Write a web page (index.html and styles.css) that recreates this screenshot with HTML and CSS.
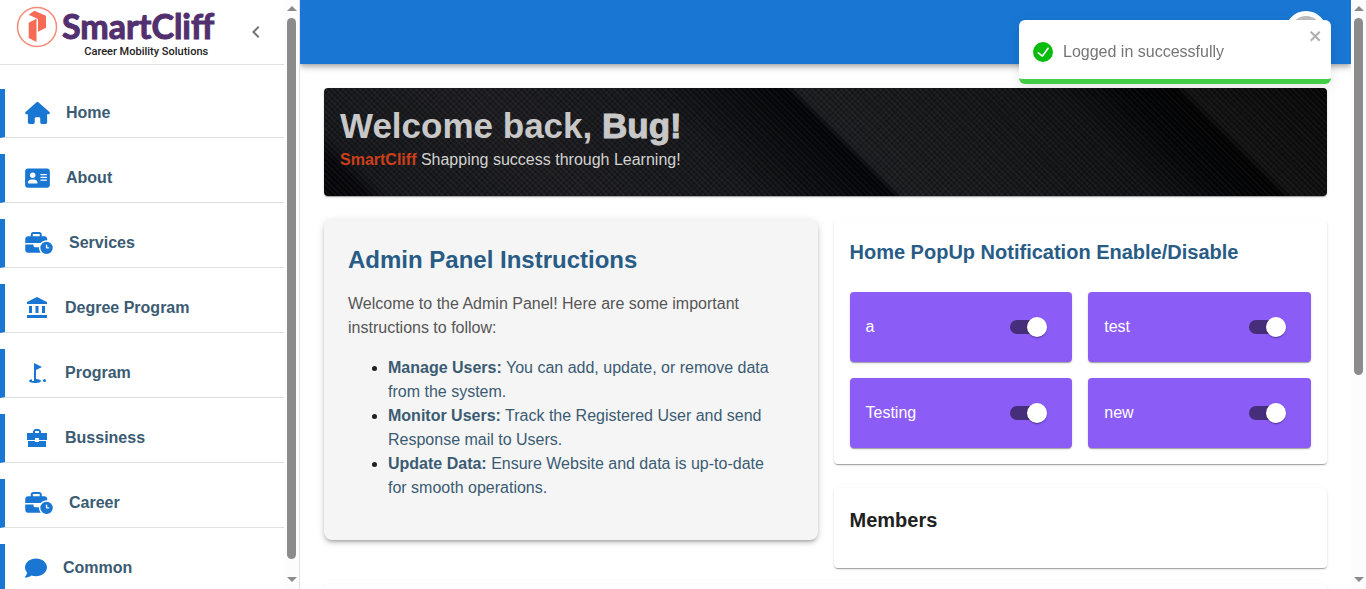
FILE: index.html
```html
<!DOCTYPE html>
<html lang="en">
<head>
<meta charset="utf-8">
<title>SmartCliff Admin</title>
<link rel="stylesheet" href="styles.css">
</head>
<body>
<svg class="symbols" aria-hidden="true">
  <symbol id="business-time" viewBox="0 0 640 512"><path d="M184 48h144c4.400 0 8 3.600 8 8v40H176V56c0-4.400 3.600-8 8-8zm-56 8v40H64C28.700 96 0 124.700 0 160v96h360.200c32.300-39.100 81.100-64 135.800-64 5.400 0 10.700.2 16 .7V160c0-35.300-28.700-64-64-64h-64V56c0-30.900-25.100-56-56-56H184c-30.900 0-56 25.100-56 56zM320 352h-96c-17.700 0-32-14.300-32-32v-32H0v128c0 35.300 28.700 64 64 64h296.200C335.100 449.600 320 410.500 320 368c0-5.400.2-10.700.7-16zM496 512a144 144 0 1 0 0-288 144 144 0 1 0 0 288zm16-208v48h32c8.800 0 16 7.200 16 16s-7.200 16-16 16h-48c-8.800 0-16-7.200-16-16v-64c0-8.800 7.200-16 16-16s16 7.200 16 16z"/></symbol>
</svg>
<div class="app">
  <aside class="sidebar">
    <div class="sidebar-content">
      <div class="brand-bar">
        <div class="brand">
          <svg class="brand-mark" viewBox="0 0 42 42" aria-hidden="true">
            <circle cx="21" cy="21" r="19.500" fill="#fff" stroke="#f58a76" stroke-width="1.500"/>
            <path d="M12.700 8.700 18.300 4.700 30 9.700V21.700L22 25.700V13z" fill="#f56b55"/>
            <path d="M12.700 16.800 20.500 12.700V36L12.700 32z" fill="#f56b55"/>
          </svg>
          <div class="brand-words">
            <span class="brand-name">SmartCliff</span>
            <span class="brand-tagline">Career Mobility Solutions</span>
          </div>
        </div>
        <button class="collapse" type="button" aria-label="Collapse menu">
          <svg viewBox="0 0 24 24" width="24" height="24"><path d="M15.410 7.410 14 6l-6 6 6 6 1.410-1.410L10.830 12z" fill="#757575"/></svg>
        </button>
      </div>
      <nav class="menu">
        <a class="menu-item" href="#"><svg class="icon-wide" viewBox="0 0 576 512"><path d="M575.8 255.500c0 18-15 32.100-32 32.100h-32l.7 160.200c0 2.700-.2 5.400-.5 8.100v16.200c0 22.100-17.900 40-40 40h-80c-22.100 0-40-17.900-40-40v-88c0-17.700-14.300-32-32-32h-64c-17.700 0-32 14.300-32 32v88c0 22.100-17.900 40-40 40h-80c-22.100 0-40-17.900-40-40V287.600H32c-18 0-32-14-32-32.100 0-9 3-17 10-24L266.400 8c7-7 15-8 22-8s15 2 21 7l255.400 224.500c8 7 12 15 11 24z"/></svg>Home</a>
        <a class="menu-item" href="#"><svg class="icon-wide" viewBox="0 0 576 512"><path d="M64 32C28.700 32 0 60.700 0 96v320c0 35.300 28.700 64 64 64h448c35.300 0 64-28.700 64-64V96c0-35.300-28.700-64-64-64H64zm80 256h64c44.200 0 80 35.800 80 80 0 8.800-7.200 16-16 16H80c-8.800 0-16-7.200-16-16 0-44.200 35.800-80 80-80zm-32-96a64 64 0 1 1 128 0 64 64 0 1 1-128 0zm256-32h128c8.800 0 16 7.200 16 16s-7.200 16-16 16H368c-8.800 0-16-7.200-16-16s7.200-16 16-16zm0 64h128c8.800 0 16 7.200 16 16s-7.200 16-16 16H368c-8.800 0-16-7.200-16-16s7.200-16 16-16zm0 64h128c8.800 0 16 7.200 16 16s-7.200 16-16 16H368c-8.800 0-16-7.200-16-16s7.200-16 16-16z"/></svg>About</a>
        <a class="menu-item" href="#"><svg class="icon-wider"><use href="#business-time"/></svg>Services</a>
        <a class="menu-item" href="#"><svg class="icon" viewBox="0 0 24 24"><path d="M12 1 2 6v2h20V6zM4 10h3v7H4zm6.500 0h3v7h-3zm6.500 0h3v7h-3zM2 19h20v3H2z"/></svg>Degree Program</a>
        <a class="menu-item" href="#"><svg class="icon" viewBox="0 0 24 24"><circle cx="19.500" cy="19.500" r="1.500"/><path d="M17 5.920 9 2v18H7v-1.730c-1.790.350-3 .990-3 1.730 0 1.100 2.690 2 6 2s6-.9 6-2c0-.990-2.160-1.810-5-1.970V8.980l6-3.060z"/></svg>Program</a>
        <a class="menu-item" href="#"><svg class="icon" viewBox="0 0 24 24"><path d="M22 7h-6V5l-2-2h-4L8 5v2H2v7h8v-2h4v2h8V7zm-8 0h-4V5h4v2zm0 9h-4v-1H3v6h18v-6h-7z"/></svg>Bussiness</a>
        <a class="menu-item" href="#"><svg class="icon-wider"><use href="#business-time"/></svg>Career</a>
        <a class="menu-item" href="#"><svg class="icon-square" viewBox="0 0 512 512"><path d="M512 240c0 114.900-114.600 208-256 208-37.100 0-72.300-6.400-104.100-17.900-11.900 8.700-31.300 20.600-54.300 30.600C73.600 471.100 44.700 480 16 480c-6.500 0-12.300-3.900-14.800-9.900s-1.100-12.800 3.400-17.400c0 0 3-3 6.500-7.400 4.100-5 9.600-12.400 15.200-21.600 10-16.600 19.500-38.400 21.400-62.900C17.700 326.800 0 285.100 0 240 0 125.100 114.600 32 256 32s256 93.100 256 208z"/></svg>Common</a>
      </nav>
    </div>
    <div class="scrollbar" aria-hidden="true"><i class="arrow-up"></i><i class="thumb thumb-menu"></i><i class="arrow-down"></i></div>
  </aside>

  <div class="page">
    <header class="topbar">
      <button class="avatar" type="button" aria-label="Account"></button>
    </header>
    <main class="content">
      <section class="banner">
        <h1 class="banner-title">Welcome back, <span class="banner-name">Bug!</span></h1>
        <p class="banner-text"><span class="banner-brand">SmartCliff</span> Shapping success through Learning!</p>
      </section>
      <div class="columns">
        <section class="instructions">
          <h2 class="instructions-title">Admin Panel Instructions</h2>
          <p class="instructions-intro">Welcome to the Admin Panel! Here are some important instructions to follow:</p>
          <ul class="instructions-list">
            <li><b>Manage Users:</b> You can add, update, or remove data from the system.</li>
            <li><b>Monitor Users:</b> Track the Registered User and send Response mail to Users.</li>
            <li><b>Update Data:</b> Ensure Website and data is up-to-date for smooth operations.</li>
          </ul>
        </section>
        <div class="side">
          <section class="card">
            <h2 class="card-title card-title-accent">Home PopUp Notification Enable/Disable</h2>
            <div class="tiles">
              <label class="tile">a<input class="switch" type="checkbox" role="switch" checked></label>
              <label class="tile">test<input class="switch" type="checkbox" role="switch" checked></label>
              <label class="tile">Testing<input class="switch" type="checkbox" role="switch" checked></label>
              <label class="tile">new<input class="switch" type="checkbox" role="switch" checked></label>
            </div>
          </section>
          <section class="card card-members">
            <h2 class="card-title">Members</h2>
          </section>
        </div>
      </div>
      <section class="card card-next"></section>
    </main>
  </div>
  <div class="scrollbar" aria-hidden="true"><i class="arrow-up"></i><i class="thumb thumb-page"></i><i class="arrow-down"></i></div>
</div>

<div class="toast" role="alert">
  <svg class="toast-icon" viewBox="0 0 24 24"><path d="M12 0a12 12 0 1 0 12 12A12.014 12.014 0 0 0 12 0zm6.927 8.200-6.845 9.289a1.011 1.011 0 0 1-1.430.188l-4.888-3.908a1 1 0 1 1 1.250-1.562l4.076 3.261 6.227-8.451a1 1 0 1 1 1.610 1.183z" fill="#07bc0c"/></svg>
  <span class="toast-text">Logged in successfully</span>
  <button class="toast-close" type="button" aria-label="Close"><svg viewBox="0 0 14 16" width="14" height="16"><path fill="#b0b0b0" fill-rule="evenodd" d="M7.710 8.230l3.750 3.750-1.480 1.480-3.750-3.750-3.750 3.750L1 11.980l3.750-3.750L1 4.480 2.480 3l3.750 3.750L9.980 3l1.480 1.480-3.750 3.750z"/></svg></button>
</div>
</body>
</html>
```
FILE: styles.css
```css
* { box-sizing: border-box; }

body {
  margin: 0;
  font: 16px/24px "Liberation Sans", Arial, sans-serif;
  color: #212121;
  background: #fff;
}

h1, h2, p, ul { margin: 0; }
button { border: 0; padding: 0; background: none; cursor: pointer; }

.symbols { display: none; }

.app { display: flex; height: 100vh; overflow: hidden; }

/* Sidebar */
.sidebar {
  flex: 0 0 300px;
  display: flex;
  border-right: 1px solid #e0e0e0;
}
.sidebar-content { flex: 1; overflow: hidden; }
.brand-bar {
  display: flex;
  align-items: center;
  justify-content: space-between;
  height: 65px;
  padding: 0 16px;
  border-bottom: 1px solid #e0e0e0;
}
.brand { display: flex; align-items: flex-start; gap: 4px; }
.brand-mark { width: 42px; height: 42px; }
.brand-words { display: flex; flex-direction: column; align-items: flex-end; }
.brand-name {
  font: 700 34px/40px Lato, sans-serif;
  color: #522f6e;
  -webkit-text-stroke: 1px #522f6e;
}
.brand-tagline {
  padding-right: 6px;
  font: 500 11px/12px Roboto, sans-serif;
  color: #222;
}
.collapse { display: flex; }

.menu {
  display: flex;
  flex-direction: column;
  gap: 16px;
  padding-top: 24px;
}
.menu-item {
  display: flex;
  align-items: center;
  gap: 16px;
  height: 49px;
  flex: none;
  padding-left: 20px;
  border-left: 5px solid #1976d2;
  border-bottom: 1px solid #e0e0e0;
  font-weight: 700;
  color: #3b5b73;
  text-decoration: none;
}
.menu-item svg { flex: none; fill: #1976d2; }
.icon { width: 24px; height: 24px; }
.icon-wide { width: 25px; height: 22px; }
.icon-wider { width: 28px; height: 22px; }
.icon-square { width: 22px; height: 22px; }

/* Scrollbars */
.scrollbar {
  flex: 0 0 15px;
  display: flex;
  flex-direction: column;
  align-items: center;
  padding: 6px 0 7px;
  background: #fcfcfc;
}
.arrow-up, .arrow-down {
  border: solid transparent;
  border-width: 0 5px;
}
.arrow-up { border-bottom: 5px solid #8b8b8b; }
.arrow-down { margin-top: auto; border-top: 5px solid #8b8b8b; }
.thumb {
  width: 9px;
  margin-top: 7px;
  border-radius: 5px;
  background: #8b8b8b;
}
.thumb-menu { height: 94%; }
.thumb-page { height: 62%; }

/* Page */
.page { flex: 1; min-width: 0; overflow: hidden; }
.topbar {
  display: flex;
  align-items: center;
  justify-content: flex-end;
  height: 64px;
  padding: 0 24px;
  background: #1976d2;
  box-shadow: 0 2px 4px -1px rgba(0,0,0,.2), 0 4px 5px rgba(0,0,0,.14), 0 1px 10px rgba(0,0,0,.12);
}
.avatar {
  width: 42px;
  height: 42px;
  border: 5px solid #fff;
  border-radius: 50%;
  background: #bdbdbd;
}
.content {
  display: flex;
  flex-direction: column;
  padding: 24px;
}

.banner {
  height: 108px;
  padding: 16px;
  border-radius: 4px;
  color: #c8c8c8;
  background:
    repeating-linear-gradient(45deg, rgba(255,255,255,.04) 0 1px, transparent 2px 4px),
    repeating-linear-gradient(-45deg, rgba(0,0,0,.25) 0 1px, transparent 2px 4px),
    linear-gradient(45deg, #07070b 30px, #17181b 46px, #1d1d21 180px, #17181b 300px, #08090c 375px, #030408 402px, #1c1d20 410px, #17181a 500px, #101214 590px, #040506 640px, #020203 677px, #121212 685px, #080808 785px);
  box-shadow: 0 2px 1px -1px rgba(0,0,0,.2), 0 1px 1px rgba(0,0,0,.14), 0 1px 3px rgba(0,0,0,.12);
}
.banner-title { font-size: 35px; line-height: 44px; }
.banner-name { font-weight: 900; -webkit-text-stroke: 1px #c8c8c8; }
.banner-text { color: #d2d2d2; }
.banner-brand { font-weight: 700; color: #cb3f19; }

.columns {
  display: grid;
  grid-template-columns: 1fr 1fr;
  align-items: start;
  gap: 16px;
  margin-top: 24px;
}

.instructions {
  padding: 24px;
  border-radius: 8px;
  background: #f5f5f5;
  box-shadow: 0 3px 3px -2px rgba(0,0,0,.2), 0 3px 4px rgba(0,0,0,.14), 0 1px 8px rgba(0,0,0,.12);
}
.instructions-title {
  margin-bottom: 16px;
  font-size: 24px;
  line-height: 32px;
  color: #285c86;
}
.instructions-intro { color: #555; }
.instructions-list { margin: 16px 0; padding: 0 16px 0 40px; color: #3b5b73; }
.instructions-list li::marker { color: #212121; }

.side { display: flex; flex-direction: column; gap: 24px; }
.card {
  padding: 16px;
  border-radius: 4px;
  background: #fff;
  box-shadow: 0 2px 1px -1px rgba(0,0,0,.2), 0 1px 1px rgba(0,0,0,.14), 0 1px 3px rgba(0,0,0,.12);
}
.card-title { font-size: 20px; line-height: 32px; }
.card-title-accent { color: #285c86; }
.card-members { padding-bottom: 32px; }
.card-next { margin-top: 16px; height: 200px; }

.tiles {
  display: grid;
  grid-template-columns: 1fr 1fr;
  gap: 16px;
  margin-top: 24px;
}
.tile {
  display: flex;
  align-items: center;
  justify-content: space-between;
  padding: 16px;
  border-radius: 4px;
  color: #fff;
  background: #8b5cf6;
  box-shadow: 0 2px 1px -1px rgba(0,0,0,.2), 0 1px 1px rgba(0,0,0,.14), 0 1px 3px rgba(0,0,0,.12);
}
.switch {
  appearance: none;
  position: relative;
  width: 58px;
  height: 38px;
  margin: 0;
  padding: 12px;
  cursor: pointer;
}
.switch::before {
  content: "";
  display: block;
  width: 34px;
  height: 14px;
  border-radius: 7px;
  background: #462e7b;
}
.switch::after {
  content: "";
  position: absolute;
  top: 9px;
  left: 9px;
  width: 20px;
  height: 20px;
  border-radius: 50%;
  background: #fff;
  box-shadow: 0 2px 1px -1px rgba(0,0,0,.2), 0 1px 1px rgba(0,0,0,.14), 0 1px 3px rgba(0,0,0,.12);
}
.switch:checked::after { left: 29px; }

/* Toast */
.toast {
  position: fixed;
  top: 20px;
  right: 35px;
  display: flex;
  align-items: center;
  gap: 10px;
  width: 312px;
  height: 64px;
  padding: 4px 14px 0;
  overflow: hidden;
  border-bottom: 5px solid #42cd46;
  border-radius: 6px;
  background: #fff;
  color: #757575;
  box-shadow: 0 4px 12px rgba(0,0,0,.1);
}
.toast-icon { flex: none; width: 20px; height: 20px; }
.toast-text { flex: 1; }
.toast-close { position: absolute; top: 8px; right: 8px; display: flex; }
```
